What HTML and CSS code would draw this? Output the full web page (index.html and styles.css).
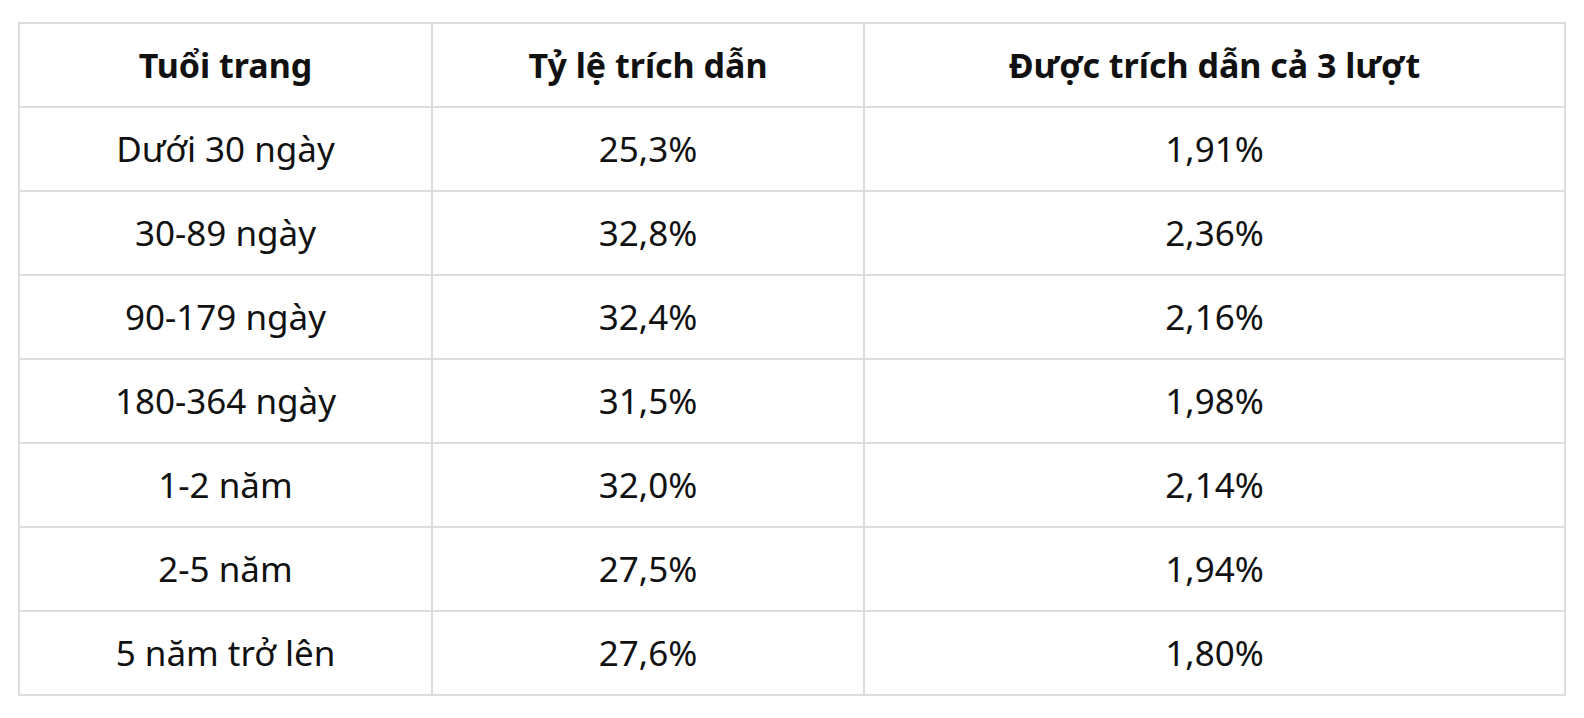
FILE: index.html
```html
<!DOCTYPE html>
<html lang="vi">
<head>
<meta charset="utf-8">
<link rel="stylesheet" href="styles.css">
</head>
<body>
<table class="data">
  <colgroup>
    <col class="c1"><col class="c2"><col class="c3">
  </colgroup>
  <thead>
    <tr><th>Tuổi trang</th><th>Tỷ lệ trích dẫn</th><th>Được trích dẫn cả 3 lượt</th></tr>
  </thead>
  <tbody>
    <tr><td>Dưới 30 ngày</td><td>25,3%</td><td>1,91%</td></tr>
    <tr><td>30-89 ngày</td><td>32,8%</td><td>2,36%</td></tr>
    <tr><td>90-179 ngày</td><td>32,4%</td><td>2,16%</td></tr>
    <tr><td>180-364 ngày</td><td>31,5%</td><td>1,98%</td></tr>
    <tr><td>1-2 năm</td><td>32,0%</td><td>2,14%</td></tr>
    <tr><td>2-5 năm</td><td>27,5%</td><td>1,94%</td></tr>
    <tr><td>5 năm trở lên</td><td>27,6%</td><td>1,80%</td></tr>
  </tbody>
</table>
</body>
</html>
```
FILE: styles.css
```css
html, body {
  margin: 0;
  padding: 0;
  background: #ffffff;
}
body {
  padding: 22px 20px 0 18px;
  font-family: "Noto Sans", "Liberation Sans", sans-serif;
  color: #111111;
}
.data {
  border-collapse: collapse;
  width: 1546px;
  table-layout: fixed;
}
.c1 { width: 413px; }
.c2 { width: 432px; }
.c3 { width: 701px; }
.data th, .data td {
  border: 2px solid #dddddd;
  height: 82px;
  padding: 0;
  text-align: center;
  vertical-align: middle;
  line-height: 40px;
}
.data th {
  font-weight: 700;
  font-size: 34px;
}
.data td {
  font-weight: 400;
  font-size: 35px;
}
```
